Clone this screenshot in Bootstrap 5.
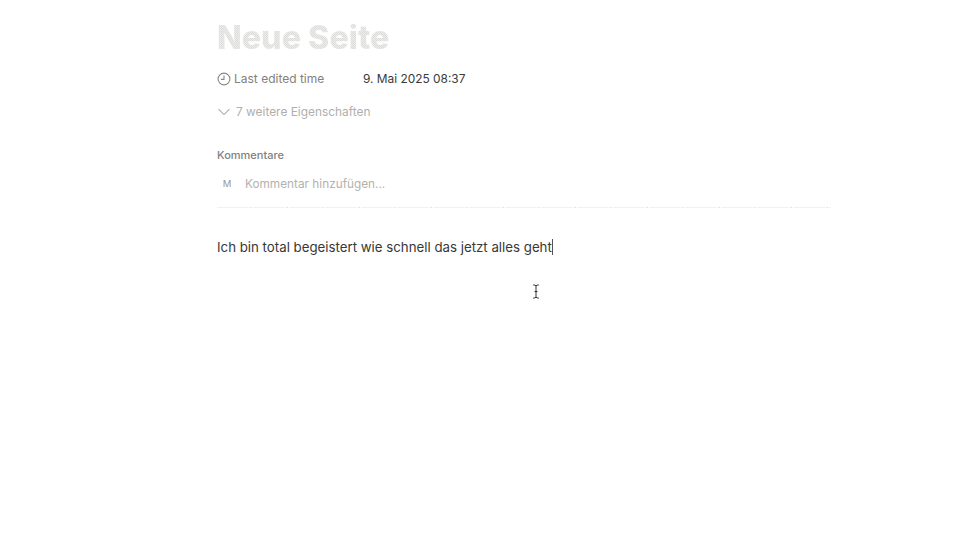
<!DOCTYPE html>
<html lang="de">
<head>
<meta charset="utf-8">
<title>Neue Seite</title>
<link href="https://cdn.jsdelivr.net/npm/bootstrap@5.3.0/dist/css/bootstrap.min.css" rel="stylesheet">
<style>
html,body{height:541px;overflow:hidden;background:#fff}
body{font-family:Inter,"Liberation Sans",sans-serif;color:#2f2f2d}
.page-col{width:614px;margin-left:217px;position:relative;height:541px}
.page-title{font-size:32.3px;line-height:40px;font-weight:800;margin:0;padding-top:18px;height:58px;color:#e2e2e1;background-image:repeating-conic-gradient(#dcdcdb 0 25%,#ededec 0 50%);background-size:2px 2px;-webkit-background-clip:text;background-clip:text;-webkit-text-fill-color:transparent;width:max-content}
.prop-row{height:20px;margin-top:11px;font-size:12px;line-height:20px}
.prop-label{width:146px;color:#82817e;gap:3px}
.prop-val{color:#3a3a38;font-size:11.9px}
.more-row{height:20px;margin-top:13px;font-size:11.9px;line-height:20px;color:#b0afac;gap:5px}
.comments-head{margin-top:25px;font-size:11px;line-height:16px;font-weight:500;color:#82817e;height:16px}
.comment-row{margin-top:11px;height:20px;font-size:11.8px;line-height:20px;color:#b3b2ae}
.avatar-m{width:20px;margin-right:8px;font-size:9.5px;color:#999894;text-align:center;font-weight:400}
.rule-line{height:1px;margin-top:13px;background:repeating-linear-gradient(90deg,#f1f1ef 0 32px,#fff 32px 33px,#e6e6e4 33px 35px,#fff 35px 36px)}
.body-text{margin-top:29px;font-size:13.27px;line-height:20px;color:#383836}
.caret-bar{display:inline-block;width:1px;height:16px;background:#555;vertical-align:-3px}
.ibeam{position:absolute;left:315px;top:284px}
</style>
</head>
<body>
<main class="page-col">
<h1 class="page-title">Neue Seite</h1>
<div class="prop-row d-flex align-items-center">
<div class="prop-label d-flex align-items-center">
<svg width="14" height="14" viewBox="0 0 14 14" fill="none" stroke="#8a8986" stroke-width="1.1"><circle cx="7" cy="7" r="5.9"/><path d="M7 3.4V7.4H3.9"/></svg>
<span>Last edited time</span>
</div>
<div class="prop-val">9. Mai 2025 08:37</div>
</div>
<div class="more-row d-flex align-items-center">
<svg width="14" height="8" viewBox="0 0 14 8" fill="none" stroke="#b0afac" stroke-width="1.1"><path d="M1.5 1.2L7 6.6 12.5 1.2"/></svg>
<span>7 weitere Eigenschaften</span>
</div>
<div class="comments-head">Kommentare</div>
<div class="comment-row d-flex align-items-center">
<div class="avatar-m">M</div>
<div>Kommentar hinzufügen...</div>
</div>
<div class="rule-line"></div>
<p class="body-text mb-0">Ich bin total begeistert wie schnell das jetzt alles geht<span class="caret-bar"></span></p>
<svg class="ibeam" width="8" height="15" viewBox="0 0 8 15" fill="none" stroke="#333" stroke-width="1"><path d="M1.2 1H3L4 2 5 1H6.8M4 2V13M1.2 14H3L4 13 5 14H6.8M2.5 7.5H5.5"/></svg>
</main>
<script src="https://cdn.jsdelivr.net/npm/bootstrap@5.3.0/dist/js/bootstrap.bundle.min.js"></script>
</body>
</html>
